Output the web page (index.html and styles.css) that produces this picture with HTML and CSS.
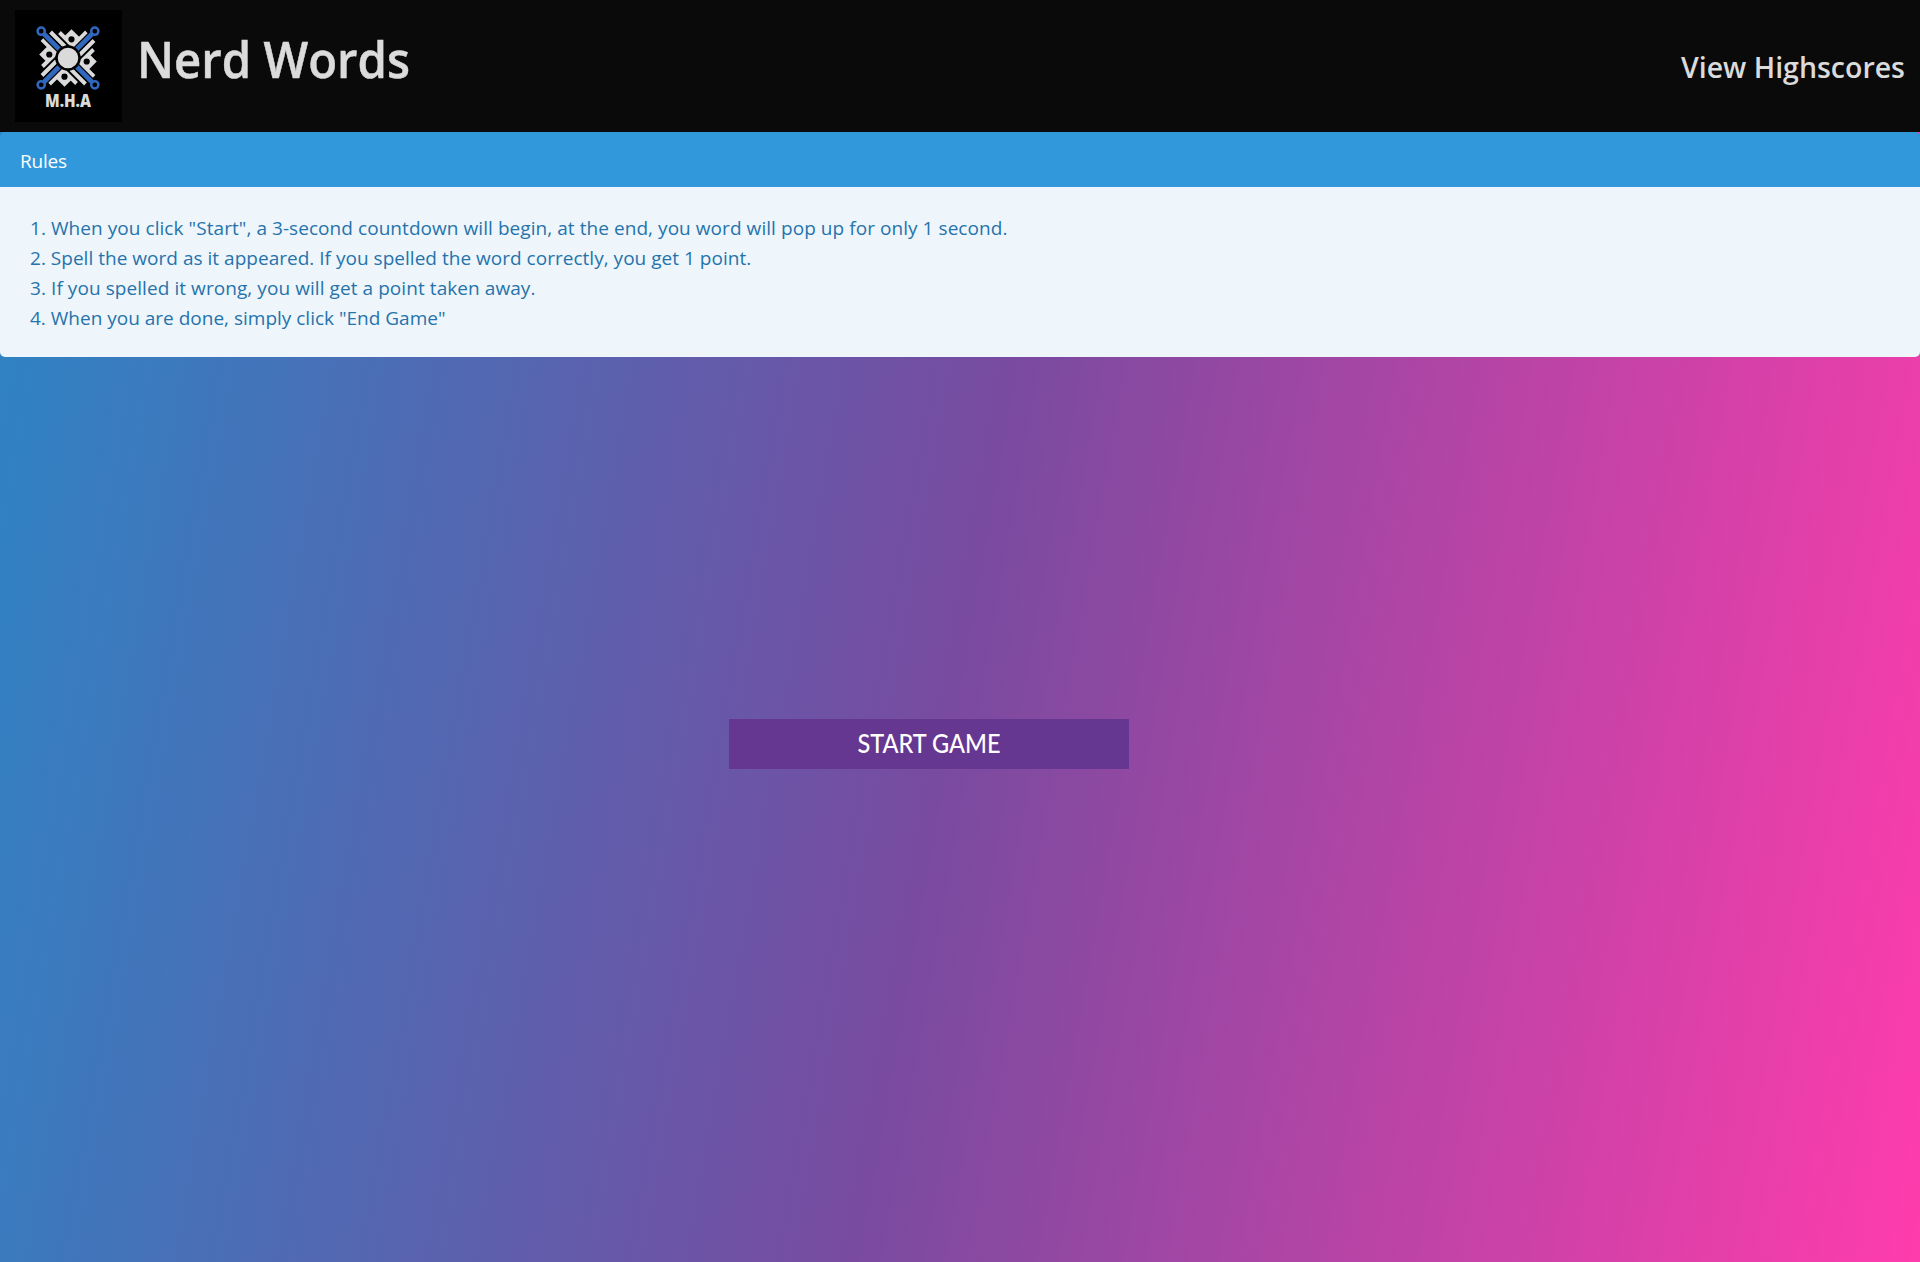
FILE: index.html
```html
<!DOCTYPE html>
<html lang="en">
<head>
<meta charset="utf-8">
<title>Nerd Words</title>
<link rel="stylesheet" href="styles.css">
</head>
<body>
<header class="header">
  <svg class="logo" viewBox="0 0 107 112" role="img" aria-label="M.H.A logo">
    <rect width="107" height="112" fill="#000"/>
    <defs>
      <g id="arm">
        <path d="M46 41 29 24" stroke="#000" stroke-width="7"/>
        <path d="M44.500 39.500 29 24" stroke="#3168bf" stroke-width="4.600"/>
        <circle cx="26.200" cy="21.200" r="3.600" fill="#000" stroke="#3168bf" stroke-width="2.500"/>
      </g>
      <g id="side">
        <path d="M35.500 22 50 36.500M44.500 22.500 58 36M71.500 22 57 36.500M50 28.500 56.500 22 63 28.500" stroke="#dadada" stroke-width="3.900"/>
        <circle cx="56.500" cy="29.300" r="4.300" fill="#000" stroke="#dadada" stroke-width="2.400"/>
      </g>
    </defs>
    <g fill="none">
      <use href="#side"/>
      <use href="#side" transform="rotate(90 53 48)"/>
      <use href="#side" transform="rotate(180 53 48)"/>
      <use href="#side" transform="rotate(270 53 48)"/>
      <use href="#arm"/>
      <use href="#arm" transform="rotate(90 53 48)"/>
      <use href="#arm" transform="rotate(180 53 48)"/>
      <use href="#arm" transform="rotate(270 53 48)"/>
      <circle cx="53" cy="48" r="11.500" fill="#dadada" stroke="#000" stroke-width="2.500"/>
    </g>
    <text class="logo-text" x="53" y="97" text-anchor="middle" textLength="46" lengthAdjust="spacingAndGlyphs">M.H.A</text>
  </svg>
  <h1 class="title"><svg class="label" width="272" height="70"><text x="-2" y="48" textLength="273" lengthAdjust="spacingAndGlyphs">Nerd Words</text></svg></h1>
  <a class="scores"><svg class="label" width="225" height="42"><text x="1" y="32" textLength="224" lengthAdjust="spacingAndGlyphs">View Highscores</text></svg></a>
</header>
<article class="message">
  <div class="message-header">Rules</div>
  <ol class="message-body">
    <li class="rule rule-one">1. When you click "Start", a 3-second countdown will begin, at the end, you word will pop up for only 1 second.</li>
    <li class="rule rule-two">2. Spell the word as it appeared. If you spelled the word correctly, you get 1 point.</li>
    <li class="rule rule-three">3. If you spelled it wrong, you will get a point taken away.</li>
    <li class="rule rule-four">4. When you are done, simply click "End Game"</li>
  </ol>
</article>
<main class="game">
  <button class="start" type="button"><svg class="label" width="400" height="50"><text x="200" y="34" text-anchor="middle" textLength="143" lengthAdjust="spacingAndGlyphs">START GAME</text></svg></button>
</main>
</body>
</html>
```
FILE: styles.css
```css
* { box-sizing: border-box; }
body {
  margin: 0;
  height: 1262px;
  overflow: hidden;
  display: flex;
  flex-direction: column;
  font-family: "Open Sans", "Noto Sans", sans-serif;
  background: linear-gradient(100deg, #2b86c5 0%, #784ba0 50%, #ff3cac 100%);
}
.header {
  height: 132px;
  flex: none;
  display: flex;
  align-items: flex-start;
  padding: 10px 15px;
  background: #0a0a0a;
  color: #dbdbdb;
}
.logo { width: 107px; height: 112px; flex: none; }
.logo-text { font: 800 17px "Open Sans", sans-serif; fill: #dadada; }
.title { margin: 20px 0 0 17px; height: 70px; font-size: 50px; font-weight: 600; }
.title .label { stroke: currentColor; stroke-width: 0.5px; }
.label { display: block; fill: currentColor; overflow: visible; }
.scores { margin: 36px 0 0 auto; font-size: 29.5px; font-weight: 600; }
.message { flex: none; border-radius: 5px; overflow: hidden; font-size: 19px; }
.message-header {
  height: 55px;
  padding: 0 20px;
  line-height: 59px;
  letter-spacing: -0.2px;
  background: #3298dc;
  color: #fff;
}
.message-body {
  margin: 0;
  height: 170px;
  padding: 26px 30px;
  list-style: none;
  background: #eef6fc;
  color: #2673ab;
}
.rule { height: 30px; line-height: 30px; white-space: nowrap; }
.rule-one { letter-spacing: 0.06px; }
.rule-two { letter-spacing: 0.02px; }
.rule-three { letter-spacing: 0.07px; }
.game { flex: 1; padding: 362px 0 0 729px; }
.start {
  display: block;
  width: 400px;
  height: 50px;
  padding: 0;
  border: 0;
  background: #663790;
  color: #fff;
  font: 500 26.5px/50px Lato, sans-serif;
}
```
